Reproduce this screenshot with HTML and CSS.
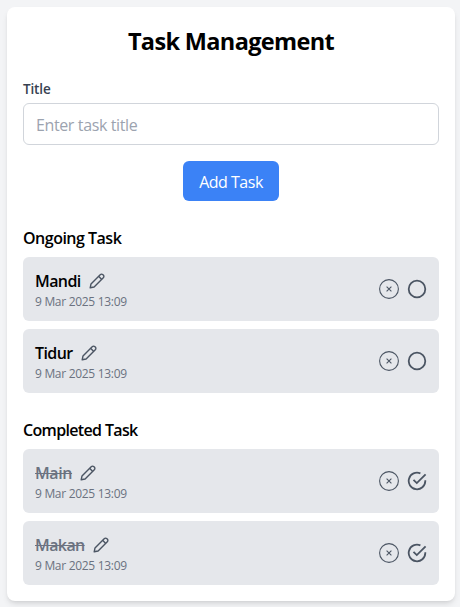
FILE: index.html
```html
<!DOCTYPE html>
<html lang="en">
<head>
<meta charset="utf-8">
<title>Task Management</title>
<link rel="stylesheet" href="styles.css">
</head>
<body>
<svg class="sprite" aria-hidden="true">
  <symbol id="pen" viewBox="0 0 16 16"><g fill="none" stroke="currentColor" stroke-width="1.4" stroke-linejoin="round"><path d="M1.2 14.8 2 10.9 11.2 1.7a1.9 1.9 0 0 1 2.7 0l.4.4a1.9 1.9 0 0 1 0 2.7L5.1 14z"/><path d="m9.6 3.3 3.1 3.1"/></g></symbol>
  <symbol id="remove" viewBox="0 0 20 20"><g fill="none" stroke="currentColor"><circle cx="10" cy="10" r="9.4" stroke-width="1.1"/><path stroke-width="1.1" d="m7.6 7.6 4.8 4.8m0-4.8-4.8 4.8"/></g></symbol>
  <symbol id="open" viewBox="0 0 20 20"><circle cx="10" cy="10" r="8.3" fill="none" stroke="currentColor" stroke-width="1.8"/></symbol>
  <symbol id="done" viewBox="0 0 20 20"><g fill="none" stroke="currentColor" stroke-width="1.8"><path d="M18.3 9.2V10a8.3 8.3 0 1 1-4.9-7.6"/><path d="M6.5 8.8 9.8 12.1 18.6 3.3"/></g></symbol>
</svg>
<main class="card">
  <h1>Task Management</h1>
  <form>
    <label for="title">Title</label>
    <input id="title" type="text" placeholder="Enter task title">
    <button type="button">Add Task</button>
  </form>
  <section>
    <h2 class="ongoing">Ongoing Task</h2>
    <ul>
      <li>
        <div><div class="name"><span>Mandi</span><svg class="pen"><use href="#pen"/></svg></div><p>9 Mar 2025 13:09</p></div>
        <div class="actions"><svg><use href="#remove"/></svg><svg><use href="#open"/></svg></div>
      </li>
      <li>
        <div><div class="name"><span>Tidur</span><svg class="pen"><use href="#pen"/></svg></div><p>9 Mar 2025 13:09</p></div>
        <div class="actions"><svg><use href="#remove"/></svg><svg><use href="#open"/></svg></div>
      </li>
    </ul>
  </section>
  <section>
    <h2 class="completed">Completed Task</h2>
    <ul>
      <li>
        <div><div class="name"><s class="main">Main</s><svg class="pen"><use href="#pen"/></svg></div><p>9 Mar 2025 13:09</p></div>
        <div class="actions"><svg><use href="#remove"/></svg><svg><use href="#done"/></svg></div>
      </li>
      <li>
        <div><div class="name"><s>Makan</s><svg class="pen"><use href="#pen"/></svg></div><p>9 Mar 2025 13:09</p></div>
        <div class="actions"><svg><use href="#remove"/></svg><svg><use href="#done"/></svg></div>
      </li>
    </ul>
  </section>
</main>
</body>
</html>
```
FILE: styles.css
```css
* { box-sizing: border-box; margin: 0; padding: 0; }
body { height: 607px; overflow: hidden; padding: 7px 5px 0 7px; background: #f3f4f6; font: 16px/24px "Segoe UI", "Open Sans", sans-serif; color: #000; }
.sprite { display: none; }
.card { width: 448px; height: 594px; padding: 16px; border-radius: 8px; background: #fff; box-shadow: 0 4px 6px -1px rgba(0,0,0,.1), 0 2px 4px -2px rgba(0,0,0,.1); }
h1 { font-size: 23.5px; line-height: 36px; font-weight: 700; text-align: center; letter-spacing: -.65px; }
form { display: flex; flex-direction: column; margin-top: 20px; }
label { height: 20px; padding-top: 1px; font-size: 13.5px; line-height: 19px; font-weight: 600; color: #374151; letter-spacing: -.15px; }
input { height: 42px; margin-top: 4px; padding: 2px 12px 0; border: 1px solid #d1d5db; border-radius: 6px; font: inherit; letter-spacing: -.38px; background: #fff; }
input::placeholder { color: #9ca3af; opacity: 1; }
button { align-self: center; width: 96px; height: 40px; margin-top: 16px; padding-top: 2px; border: 0; border-radius: 6px; background: #3b82f6; color: #fff; font: inherit; letter-spacing: -.5px; }
section { margin-top: 24px; }
h2 { height: 24px; padding-top: 2px; font-size: 16px; line-height: 22px; font-weight: 600; letter-spacing: -.5px; }
.completed { letter-spacing: -.66px; }
ul { display: grid; gap: 8px; margin-top: 8px; list-style: none; }
li { display: flex; justify-content: space-between; align-items: center; height: 64px; padding: 12px; border-radius: 6px; background: #e5e7eb; }
.name { display: flex; align-items: center; gap: 8px; height: 24px; font-weight: 600; letter-spacing: -.6px; }
.name span, .name s { height: 24px; padding-top: 1px; line-height: 23px; }
.name s { color: #6b7280; }
.name .main { letter-spacing: -.4px; }
li p { height: 16px; padding-top: 2px; font-size: 12px; line-height: 14px; color: #6b7280; letter-spacing: -.3px; }
.pen { width: 16px; height: 16px; color: #4b5563; }
.actions { display: flex; gap: 8px; color: #4b5563; }
.actions svg { width: 20px; height: 20px; }
```
